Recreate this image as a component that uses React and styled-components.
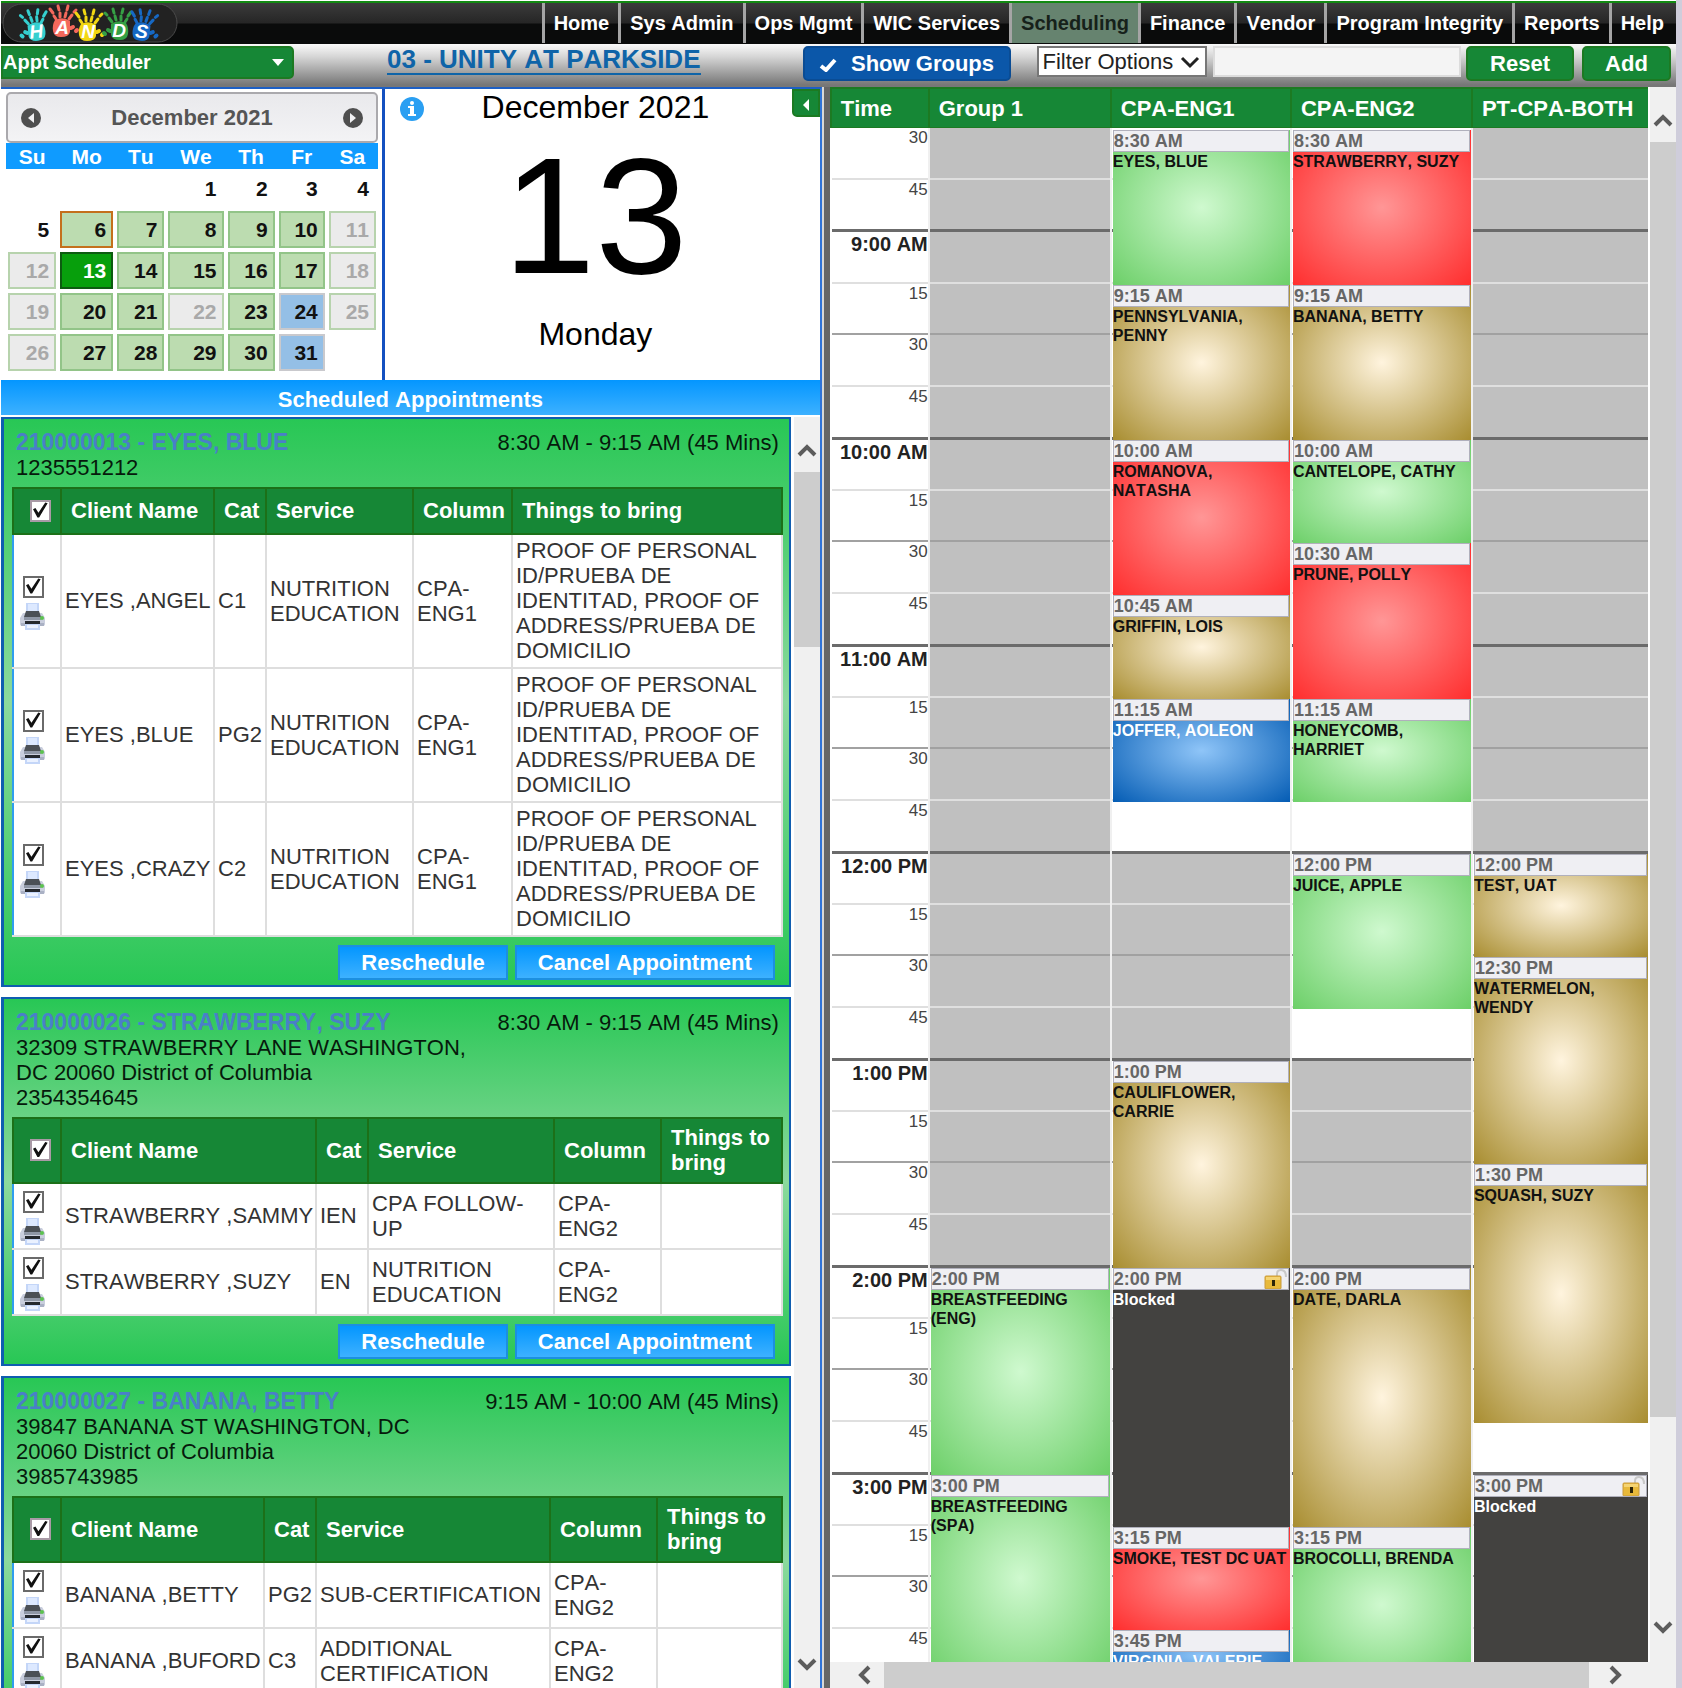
import styled, { createGlobalStyle, css } from 'styled-components'

const GlobalStyle = createGlobalStyle`
  * {
    box-sizing: border-box;
  }

  body {
    margin: 0;
    background: #cfcddb;
    color: #111;
    font-family: 'Liberation Sans', Arial, sans-serif;
    font-size: 22px;
    font-kerning: none;
    line-height: 25px;
  }

  button,
  select,
  input {
    font: inherit;
    font-kerning: none;
    margin: 0;
  }
`

/* ---------- page ---------- */

const Page = styled.div`
  display: flex;
  flex-direction: column;
  height: 100vh;
  margin-right: 6px;
  padding-left: 1px;
  overflow: hidden;
  background: #fff;
`

const Header = styled.header`
  display: flex;
  justify-content: space-between;
  height: 43px;
  flex: none;
  margin-top: 1px;
  border-top: 2px solid #128a12;
  background: linear-gradient(#3b3b3b, #262626 48%, #0a0b0b 52%, #0a0b0b);
`

const Nav = styled.nav`
  display: flex;
  padding-bottom: 1px;
`

const NavLink = styled.a`
  display: flex;
  align-items: center;
  padding: 1px 9px 0;
  border-left: 3px solid #a5a5a5;
  font-size: 20px;
  font-weight: bold;
  text-decoration: none;
  white-space: nowrap;
  color: ${({ $active }) => ($active ? '#16211a' : '#fff')};
  background: ${({ $active }) => ($active ? '#66836f' : 'transparent')};

  &:last-child {
    padding-right: 12px;
  }
`

/* ---------- toolbar ---------- */

const Toolbar = styled.div`
  display: flex;
  align-items: flex-start;
  flex: none;
  height: 43px;
  padding: 2px 5px 0 0;
  background: linear-gradient(#fafafa, #d5d5d5 30%, #777 95%);
`

const ScreenPicker = styled.div`
  display: flex;
  align-items: center;
  flex: 0 0 293px;
  height: 33px;
  border: 2px solid #1c7a22;
  border-radius: 0 5px 5px 0;
  background: #168736;
  color: #fff;

  select {
    flex: 1;
    padding: 0;
    border: 0;
    appearance: none;
    background: none;
    color: inherit;
    font-size: 20px;
    font-weight: bold;
  }

  svg {
    margin-right: 8px;
  }
`

const ClinicLink = styled.a`
  margin: 0 102px 0 93px;
  border-bottom: 2px solid #0f64a8;
  color: #0f64a8;
  font-size: 26px;
  font-weight: bold;
  line-height: 27px;
  text-decoration: none;
  white-space: nowrap;
`

const ToolButton = styled.button`
  display: flex;
  align-items: center;
  justify-content: center;
  gap: 14px;
  flex: none;
  width: ${({ $width }) => $width}px;
  height: 35px;
  padding: 0;
  border: 2px solid ${({ $blue }) => ($blue ? '#0a4c94' : '#1c7a22')};
  border-radius: 5px;
  background: ${({ $blue }) => ($blue ? '#0b57a9' : '#168736')};
  color: #fff;
  font-weight: bold;
`

const FilterPicker = styled.div`
  display: flex;
  align-items: center;
  flex: 0 0 170px;
  height: 31px;
  margin: 0 6px 0 26px;
  border: 2px solid #777;
  background: #fff;

  select {
    flex: 1;
    min-width: 0;
    padding: 0 0 0 4px;
    border: 0;
    appearance: none;
    background: none;
    color: #222;
  }

  svg {
    margin-right: 5px;
  }
`

const SearchInput = styled.input`
  flex: 1;
  min-width: 0;
  height: 31px;
  border: 2px solid #dcdcdc;
  background: #f4f4f4;
`

const ButtonPair = styled.div`
  display: flex;
  gap: 8px;
  margin-left: 5px;
`

/* ---------- left pane ---------- */

const Main = styled.main`
  display: flex;
  flex: 1;
  min-height: 0;
`

const LeftPane = styled.section`
  display: flex;
  flex-direction: column;
  width: 49%;
  border-top: 2px solid #1d5fc4;
  border-right: 2px solid #2f73d8;
`

const Splitter = styled.div`
  flex: 0 0 8px;
  border-left: 2px solid #d8d8d8;
  background: #666;
`

const DateArea = styled.div`
  display: flex;
  flex: none;
  height: 291px;
`

const Calendar = styled.div`
  flex: 0 0 384px;
  padding: 3px 4px 0 5px;
  border-right: 3px solid #1450c0;
`

const CalendarHead = styled.div`
  display: flex;
  align-items: center;
  justify-content: space-between;
  height: 51px;
  padding: 0 12px;
  border: 2px solid #aaa9ad;
  border-radius: 5px;
  background: linear-gradient(#e9e9ec, #f3f3f5);
  color: #555;
  font-weight: bold;
`

const RoundButton = styled.button`
  display: flex;
  padding: 0;
  border: 0;
  background: none;
`

const DateTable = styled.table`
  width: 100%;
  table-layout: fixed;
  border-collapse: collapse;
  font-size: 21px;
  font-weight: bold;

  th {
    height: 26px;
    padding: 0;
    background: #0f9bff;
    color: #fff;
  }

  td {
    height: 41px;
    padding: 1px 2px 3px;
  }
`

const dayLooks = {
  plain: css`
    border-color: transparent;
    background: none;
    color: #111;
  `,
  open: css`
    border-color: #92c488;
    background: #bcdcb0;
    color: #111;
  `,
  today: css`
    border-color: #c4701c;
    background: #bcdcb0;
    color: #111;
  `,
  picked: css`
    border-color: #0c5c10;
    background: #079f0c;
    color: #fff;
  `,
  closed: css`
    border-color: #b7d3ad;
    background: #ebebeb;
    color: #a9a9a9;
  `,
  holiday: css`
    border-color: #c9c9cd;
    background: #94bfe6;
    color: #111;
  `,
}

const Day = styled.button`
  display: block;
  width: 100%;
  height: 37px;
  padding: 0 5px 1px 0;
  border: 2px solid;
  text-align: right;
  ${({ $look }) => dayLooks[$look]}
`

const DayPanel = styled.div`
  display: grid;
  grid-template-columns: 40px 1fr 54px;
  flex: 1;
  text-align: center;
  color: #000;

  > svg {
    margin: 8px 0 0 15px;
  }
`

const BigDate = styled.div`
  display: flex;
  flex-direction: column;
  font-size: 32px;
  line-height: 36px;

  strong {
    margin-bottom: 9px;
    font-size: 166px;
    font-weight: normal;
    line-height: 182px;
  }
`

const CollapseButton = styled.button`
  justify-self: end;
  width: 28px;
  height: 28px;
  padding: 0;
  border: 2px solid #1c7a22;
  border-radius: 0 0 0 5px;
  background: #168736;
`

const ListTitle = styled.h2`
  flex: none;
  height: 35px;
  margin: 0 0 2px;
  background: linear-gradient(#0496ff, #3db1ff);
  color: #fff;
  font-size: 22px;
  line-height: 40px;
  text-align: center;
`

const ListArea = styled.div`
  display: flex;
  gap: 3px;
  flex: 1;
  min-height: 0;
`

const CardList = styled.div`
  flex: 1;
  min-width: 0;
  overflow: hidden;
`

/* ---------- appointment cards ---------- */

const Card = styled.article`
  margin-bottom: 10px;
  padding: 11px 6px 5px 8px;
  border: 2px solid #0f5db0;
  border-left-width: 3px;
  background: linear-gradient(#28c755, #8cd99d 50%, #28c755);
`

const CardHead = styled.div`
  display: flex;
  justify-content: space-between;
  margin-bottom: 7px;
  padding: 0 4px;
  color: #061a0c;

  a {
    display: block;
    color: #4a7fc8;
    font-size: 23px;
    font-weight: bold;
    text-decoration: none;
  }
`

const ClientTable = styled.table`
  width: 100%;
  table-layout: fixed;
  border-collapse: collapse;
  background: #fff;
  color: #333;

  th {
    height: 46px;
    padding: 6px 0 7px 9px;
    border: 2px solid #1c7018;
    background: #168736;
    color: #fff;
    text-align: left;
  }

  td {
    height: 66px;
    padding: 3px 4px 4px 3px;
    border: 2px solid #dedede;
  }

  td:first-child {
    padding: 0 0 0 3px;
    border-left-color: #2f9dee;
  }

  .name,
  .cat {
    padding-right: 0;
    white-space: nowrap;
  }
`

const Picks = styled.div`
  display: flex;
  flex-direction: column;
  align-items: flex-start;
  gap: 5px;
  padding: 3px 0 0 6px;
`

const PrintButton = styled.button`
  display: flex;
  margin-left: -3px;
  padding: 0;
  border: 0;
  background: none;
`

const Tick = styled.input.attrs({ type: 'checkbox', defaultChecked: true })`
  display: block;
  width: 21px;
  height: 22px;
  border: 2px solid #6a6a6a;
  appearance: none;
  background: #fff;

  th & {
    margin-left: 7px;
    border-color: #a99aa6;
  }

  &:checked::before {
    content: '';
    display: block;
    width: 17px;
    height: 17px;
    background: #111;
    clip-path: polygon(6% 45%, 20% 38%, 38% 66%, 78% 6%, 92% 10%, 42% 94%, 32% 94%);
  }
`

const CardActions = styled.div`
  display: flex;
  justify-content: flex-end;
  gap: 7px;
  margin-top: 8px;
  padding-right: 8px;
`

const ActionButton = styled.button`
  height: 35px;
  padding: 0 21px;
  border: 2px solid #1c8fe0;
  background: linear-gradient(#0496ff, #3db1ff);
  color: #fff;
  font-weight: bold;
  line-height: 25px;
`

/* ---------- scrollbars ---------- */

const ScrollTrack = styled.div`
  display: flex;
  flex-direction: ${({ $across }) => ($across ? 'row' : 'column')};
  flex: 0 0 26px;
  background: #f0f0f0;
`

const ScrollButton = styled.button`
  display: flex;
  align-items: center;
  justify-content: center;
  flex: 0 0 ${({ $size }) => $size}px;
  padding: ${({ $inset }) => $inset || '0'};
  border: 0;
  background: none;
`

const ScrollRoom = styled.div`
  display: flex;
  flex-direction: inherit;
  flex: 1;
`

const ScrollThumb = styled.div`
  flex: 0 0 ${({ $share }) => $share}%;
  background: #cdcdcd;
`

/* ---------- schedule ---------- */

const SchedulePane = styled.section`
  display: flex;
  flex-direction: column;
  flex: 1;
  min-width: 0;
`

const ScheduleBody = styled.div`
  display: flex;
  flex: 1;
  min-height: 0;
`

const Columns = styled.div`
  display: grid;
  grid-template-columns: 98px 182fr 180fr 181fr 177fr;
  grid-template-rows: 41px 1fr;
  flex: 1;
  min-width: 0;
  margin-right: 2px;
  overflow: hidden;
`

const ColumnHead = styled.div`
  padding: 7px 0 0 9px;
  border: solid #1c7a22;
  border-width: 2px 0 1px 2px;
  background: #168736;
  color: #fff;
  font-weight: bold;
  white-space: nowrap;
`

const SlotGrid = styled.div`
  display: grid;
  grid-template-columns: 100%;
  grid-template-rows: 50px 51px 53px 51px 52px 52px repeat(6, 52px 51px 52px 52px);
  min-height: 0;
  border-left: 2px solid ${({ $time }) => ($time ? '#fff' : '#f0f0f0')};
`

const slotLines = {
  hour: '3px solid #6b6b6b',
  half: '2px solid #a1a1a1',
  quarter: '2px solid #dfdfdf',
  none: '0 solid #fff',
}

const Slot = styled.div`
  grid-column: 1;
  grid-row: ${({ $row }) => $row};
  border-top: ${({ $line }) => slotLines[$line]};
  background: ${({ $closed }) => ($closed ? '#c0c0c0' : '#fff')};
`

const TimeSlot = styled(Slot)`
  color: #444;
  font-size: 17px;
  line-height: 20px;
  text-align: right;
  white-space: nowrap;

  strong {
    color: #222;
    font-size: 20px;
    line-height: 24px;
  }
`

const eventFills = {
  green: 'radial-gradient(#cff9cf, #6ccf68)',
  red: 'radial-gradient(#ff9696, #ff2e2e)',
  gold: 'radial-gradient(#fff4de, #a88d30)',
  blue: 'radial-gradient(#8fc5f8, #045cb4)',
  dark: '#434240',
}

const EventBlock = styled.div`
  z-index: 1;
  grid-column: 1;
  grid-row: ${({ $row, $span }) => `${$row} / span ${$span}`};
  min-height: 0;
  margin: ${({ $row }) => ($row === 1 ? 2 : 3)}px 0 -3px 1px;
  overflow: hidden;
  background: ${({ $fill }) => eventFills[$fill]};
  color: ${({ $fill }) => ($fill === 'blue' || $fill === 'dark' ? '#fff' : '#111')};
  font-size: 16px;
  font-weight: bold;
  line-height: 19px;
  white-space: pre-line;
`

const EventTime = styled.div`
  display: flex;
  justify-content: space-between;
  height: 22px;
  margin-right: 1px;
  border: 1px solid #b0b0bc;
  background: #efeff3;
  color: #666;
  font-size: 18px;
  line-height: 21px;
`

/* ---------- drawings ---------- */

function Hand({ x, y, color, letter, tilt = 0, mirror }) {
  return (
    <g transform={`translate(${x} ${y}) rotate(${tilt})`}>
      <g transform={mirror ? 'scale(-1 1)' : undefined}>
        <g stroke={color} strokeLinecap="round" fill="none">
          <path d="M-7 -7 L-10 -11 M-12 -14 L-14 -16" strokeWidth="3" />
          <path d="M-3 -9 L-4 -13 M-5 -16 L-6 -20" strokeWidth="3" />
          <path d="M2 -9 L2 -13 M3 -16 L4 -20" strokeWidth="3" />
          <path d="M6 -7 L8 -10 M9 -13 L12 -17" strokeWidth="3" />
          <path d="M-9 2 L-11 1 M-14 5 L-15 4" strokeWidth="4" />
        </g>
        <path d="M-8 -5 Q-1 -10 7 -6 Q10 -1 9 5 Q8 11 1 11 Q-7 11 -8 6Z" fill={color} />
      </g>
      <text
        x="0"
        y="8"
        fill="#fff"
        fontSize="19"
        fontWeight="bold"
        fontStyle="italic"
        textAnchor="middle"
      >
        {letter}
      </text>
    </g>
  )
}

function Logo() {
  return (
    <svg width="178" height="41" viewBox="0 0 178 41" role="img" aria-label="HANDS">
      <rect x="2" y="1" width="174" height="38" rx="19" fill="#222" stroke="#4a4a4a" />
      <Hand x={35} y={27} color="#35cfcf" letter="H" tilt={-6} />
      <Hand x={61} y={23} color="#f4685c" letter="A" mirror />
      <Hand x={87} y={27} color="#f2d713" letter="N" mirror />
      <Hand x={118} y={26} color="#35a045" letter="D" />
      <Hand x={141} y={27} color="#1668c4" letter="S" tilt={6} mirror />
    </svg>
  )
}

function Chevron({ turn = 0, color = '#5c5c5c', width = 4 }) {
  return (
    <svg width="20" height="20" viewBox="0 0 20 20" aria-hidden="true">
      <path
        d="M2 6 L10 14 L18 6"
        transform={`rotate(${turn} 10 10)`}
        fill="none"
        stroke={color}
        strokeWidth={width}
      />
    </svg>
  )
}

function CircleArrow({ flip }) {
  return (
    <svg width="22" height="22" viewBox="0 0 22 22" aria-hidden="true">
      <circle cx="11" cy="11" r="10" fill="#4f4f4f" />
      <path d={flip ? 'M8 6 L14 11 L8 16Z' : 'M14 6 L8 11 L14 16Z'} fill="#f0f0f2" />
    </svg>
  )
}

function InfoIcon() {
  return (
    <svg width="24" height="24" viewBox="0 0 24 24" aria-hidden="true">
      <circle cx="12" cy="12" r="12" fill="#2a9ff2" />
      <circle cx="12" cy="6" r="2" fill="#fff" />
      <path d="M8 9 H14 V17 H16 V19 H8 V17 H10 V11 H8Z" fill="#fff" />
    </svg>
  )
}

function PrinterIcon() {
  return (
    <svg width="25" height="27" viewBox="0 0 25 27" aria-hidden="true">
      <path d="M6 0 H19 V10 H6Z" fill="#c4d6f8" />
      <path d="M8 1 H17 V8 H8Z" fill="#dde9ff" />
      <path d="M3 10 H22 L25 15 V21 Q25 23 22 23 H3 Q0 23 0 21 V15Z" fill="#c9cedd" />
      <path d="M6 8 H19 L21 14 H4Z" fill="#4b5056" />
      <path d="M4 14 H21 V17 H4Z" fill="#8f97a6" />
      <path d="M5 18 H20 V21 H5Z" fill="#24282e" />
      <path d="M1 20 H5 V23 H1Z M20 20 H24 V23 H20Z" fill="#aab1c4" />
      <path d="M5 21 H20 V27 H5Z" fill="#c4d6f8" />
      <path d="M7 22 H18 V25 H7Z" fill="#eaf1ff" />
      <circle cx="22" cy="15" r="2" fill="#5bc24e" />
    </svg>
  )
}

function LockIcon() {
  return (
    <svg width="24" height="20" viewBox="0 0 24 20" aria-hidden="true">
      <path d="M13 7 V5 Q13 1 17 1 Q22 1 22 8" fill="none" stroke="#c9c9c9" strokeWidth="2" />
      <rect x="1" y="7" width="16" height="13" rx="1" fill="#e8b93a" stroke="#c99a3c" />
      <path d="M2 8 H16 V11 H2Z" fill="#f5d473" />
      <rect x="8" y="11" width="3" height="6" fill="#2c2408" />
    </svg>
  )
}

/* ---------- data ---------- */

const menu = [
  'Home',
  'Sys Admin',
  'Ops Mgmt',
  'WIC Services',
  'Scheduling',
  'Finance',
  'Vendor',
  'Program Integrity',
  'Reports',
  'Help',
]

const weekdays = ['Su', 'Mo', 'Tu', 'We', 'Th', 'Fr', 'Sa']
const dayWidths = [52, 57, 51, 59, 51, 50, 51]
const weeks = [
  [0, 0, 0, 1, 2, 3, 4],
  [5, 6, 7, 8, 9, 10, 11],
  [12, 13, 14, 15, 16, 17, 18],
  [19, 20, 21, 22, 23, 24, 25],
  [26, 27, 28, 29, 30, 31, 0],
]

function dayLook(day) {
  if (day < 6) return 'plain'
  if (day === 6) return 'today'
  if (day === 13) return 'picked'
  if ([24, 31].includes(day)) return 'holiday'
  if ([11, 12, 18, 19, 22, 25, 26].includes(day)) return 'closed'
  return 'open'
}

const proofs =
  'PROOF OF PERSONAL ID/PRUEBA DE IDENTITAD, PROOF OF ADDRESS/PRUEBA DE DOMICILIO'

const appointments = [
  {
    title: '210000013 - EYES, BLUE',
    time: '8:30 AM - 9:15 AM (45 Mins)',
    lines: ['1235551212'],
    widths: [48, 153, 52, 147, 99],
    clients: [
      ['EYES ,ANGEL', 'C1', 'NUTRITION EDUCATION', 'CPA-ENG1', proofs],
      ['EYES ,BLUE', 'PG2', 'NUTRITION EDUCATION', 'CPA-ENG1', proofs],
      ['EYES ,CRAZY', 'C2', 'NUTRITION EDUCATION', 'CPA-ENG1', proofs],
    ],
  },
  {
    title: '210000026 - STRAWBERRY, SUZY',
    time: '8:30 AM - 9:15 AM (45 Mins)',
    lines: ['32309 STRAWBERRY LANE WASHINGTON,', 'DC 20060 District of Columbia', '2354354645'],
    widths: [48, 255, 52, 186, 107],
    clients: [
      ['STRAWBERRY ,SAMMY', 'IEN', 'CPA FOLLOW-UP', 'CPA-ENG2', ''],
      ['STRAWBERRY ,SUZY', 'EN', 'NUTRITION EDUCATION', 'CPA-ENG2', ''],
    ],
  },
  {
    title: '210000027 - BANANA, BETTY',
    time: '9:15 AM - 10:00 AM (45 Mins)',
    lines: ['39847 BANANA ST WASHINGTON, DC', '20060 District of Columbia', '3985743985'],
    widths: [48, 203, 52, 234, 107],
    clients: [
      ['BANANA ,BETTY', 'PG2', 'SUB-CERTIFICATION', 'CPA-ENG2', ''],
      ['BANANA ,BUFORD', 'C3', 'ADDITIONAL CERTIFICATION', 'CPA-ENG2', ''],
    ],
  },
]

// start is in slots of 15 minutes counted from 8:30, closed holds [from, to)
const resources = [
  {
    name: 'Group 1',
    closed: [[0, 22]],
    events: [
      { start: 22, slots: 4, time: '2:00 PM', who: 'BREASTFEEDING\n(ENG)', fill: 'green' },
      { start: 26, slots: 4, time: '3:00 PM', who: 'BREASTFEEDING\n(SPA)', fill: 'green' },
    ],
  },
  {
    name: 'CPA-ENG1',
    closed: [[14, 18]],
    events: [
      { start: 0, slots: 3, time: '8:30 AM', who: 'EYES, BLUE', fill: 'green' },
      { start: 3, slots: 3, time: '9:15 AM', who: 'PENNSYLVANIA,\nPENNY', fill: 'gold' },
      { start: 6, slots: 3, time: '10:00 AM', who: 'ROMANOVA,\nNATASHA', fill: 'red' },
      { start: 9, slots: 2, time: '10:45 AM', who: 'GRIFFIN, LOIS', fill: 'gold' },
      { start: 11, slots: 2, time: '11:15 AM', who: 'JOFFER, AOLEON', fill: 'blue' },
      { start: 18, slots: 4, time: '1:00 PM', who: 'CAULIFLOWER,\nCARRIE', fill: 'gold' },
      { start: 22, slots: 5, time: '2:00 PM', who: 'Blocked', fill: 'dark' },
      { start: 27, slots: 2, time: '3:15 PM', who: 'SMOKE, TEST DC UAT', fill: 'red' },
      { start: 29, slots: 1, time: '3:45 PM', who: 'VIRGINIA, VALERIE', fill: 'blue' },
    ],
  },
  {
    name: 'CPA-ENG2',
    closed: [[18, 22]],
    events: [
      { start: 0, slots: 3, time: '8:30 AM', who: 'STRAWBERRY, SUZY', fill: 'red' },
      { start: 3, slots: 3, time: '9:15 AM', who: 'BANANA, BETTY', fill: 'gold' },
      { start: 6, slots: 2, time: '10:00 AM', who: 'CANTELOPE, CATHY', fill: 'green' },
      { start: 8, slots: 3, time: '10:30 AM', who: 'PRUNE, POLLY', fill: 'red' },
      { start: 11, slots: 2, time: '11:15 AM', who: 'HONEYCOMB,\nHARRIET', fill: 'green' },
      { start: 14, slots: 3, time: '12:00 PM', who: 'JUICE, APPLE', fill: 'green' },
      { start: 22, slots: 5, time: '2:00 PM', who: 'DATE, DARLA', fill: 'gold' },
      { start: 27, slots: 3, time: '3:15 PM', who: 'BROCOLLI, BRENDA', fill: 'green' },
    ],
  },
  {
    name: 'PT-CPA-BOTH',
    closed: [[0, 14]],
    events: [
      { start: 14, slots: 2, time: '12:00 PM', who: 'TEST, UAT', fill: 'gold' },
      { start: 16, slots: 4, time: '12:30 PM', who: 'WATERMELON,\nWENDY', fill: 'gold' },
      { start: 20, slots: 5, time: '1:30 PM', who: 'SQUASH, SUZY', fill: 'gold' },
      { start: 26, slots: 4, time: '3:00 PM', who: 'Blocked', fill: 'dark' },
    ],
  },
]

const slots = Array.from({ length: 30 }, (_, index) => {
  const minutes = 510 + index * 15
  const hour = Math.floor(minutes / 60)
  const minute = minutes % 60
  let line = 'quarter'
  if (minute === 0) line = 'hour'
  if (minute === 30) line = 'half'
  if (index === 0) line = 'none'
  return {
    index,
    line,
    minute,
    label: minute ? `${minute}` : `${hour > 12 ? hour - 12 : hour}:00 ${hour < 12 ? 'AM' : 'PM'}`,
  }
})

/* ---------- parts ---------- */

function Scrollbar({ across, start = 55, startInset, end, share }) {
  return (
    <ScrollTrack $across={across}>
      <ScrollButton $size={start} $inset={startInset} aria-label="Scroll back">
        <Chevron turn={across ? 90 : 180} />
      </ScrollButton>
      <ScrollRoom>
        <ScrollThumb $share={share} />
      </ScrollRoom>
      <ScrollButton
        $size={end}
        $inset={across ? '0 36px 0 0' : undefined}
        aria-label="Scroll forward"
      >
        <Chevron turn={across ? -90 : 0} />
      </ScrollButton>
    </ScrollTrack>
  )
}

function MonthCalendar() {
  return (
    <Calendar>
      <CalendarHead>
        <RoundButton aria-label="Previous month">
          <CircleArrow />
        </RoundButton>
        <span>December 2021</span>
        <RoundButton aria-label="Next month">
          <CircleArrow flip />
        </RoundButton>
      </CalendarHead>
      <DateTable>
        <colgroup>
          {dayWidths.map((width, i) => (
            <col key={i} width={width} />
          ))}
        </colgroup>
        <thead>
          <tr>
            {weekdays.map((name) => (
              <th key={name}>{name}</th>
            ))}
          </tr>
        </thead>
        <tbody>
          {weeks.map((week) => (
            <tr key={week[1]}>
              {week.map((day, i) => (
                <td key={i}>{day > 0 && <Day $look={dayLook(day)}>{day}</Day>}</td>
              ))}
            </tr>
          ))}
        </tbody>
      </DateTable>
    </Calendar>
  )
}

function AppointmentCard({ title, time, lines, widths, clients }) {
  return (
    <Card>
      <CardHead>
        <div>
          <a href="#family">{title}</a>
          {lines.map((line) => (
            <div key={line}>{line}</div>
          ))}
        </div>
        <span>{time}</span>
      </CardHead>
      <ClientTable>
        <colgroup>
          {widths.map((width, i) => (
            <col key={i} width={width} />
          ))}
          <col />
        </colgroup>
        <thead>
          <tr>
            <th>
              <Tick aria-label="Select all clients" />
            </th>
            <th>Client Name</th>
            <th>Cat</th>
            <th>Service</th>
            <th>Column</th>
            <th>Things to bring</th>
          </tr>
        </thead>
        <tbody>
          {clients.map(([name, cat, service, column, bring]) => (
            <tr key={name}>
              <td>
                <Picks>
                  <Tick aria-label={name} />
                  <PrintButton aria-label="Print">
                    <PrinterIcon />
                  </PrintButton>
                </Picks>
              </td>
              <td className="name">{name}</td>
              <td className="cat">{cat}</td>
              <td>{service}</td>
              <td>{column}</td>
              <td>{bring}</td>
            </tr>
          ))}
        </tbody>
      </ClientTable>
      <CardActions>
        <ActionButton>Reschedule</ActionButton>
        <ActionButton>Cancel Appointment</ActionButton>
      </CardActions>
    </Card>
  )
}

function ResourceColumn({ closed, events }) {
  const isClosed = (index) => closed.some(([from, to]) => index >= from && index < to)

  return (
    <SlotGrid>
      {slots.map(({ index, line }) => (
        <Slot key={index} $row={index + 1} $line={line} $closed={isClosed(index)} />
      ))}
      {events.map(({ start, slots: span, time, who, fill }) => (
        <EventBlock key={start} $row={start + 1} $span={span} $fill={fill}>
          <EventTime>
            {time}
            {fill === 'dark' && <LockIcon />}
          </EventTime>
          {who}
        </EventBlock>
      ))}
    </SlotGrid>
  )
}

function App() {
  return (
    <Page>
      <GlobalStyle />
      <Header>
        <Logo />
        <Nav>
          {menu.map((item) => (
            <NavLink key={item} href="#menu" $active={item === 'Scheduling'}>
              {item}
            </NavLink>
          ))}
        </Nav>
      </Header>

      <Toolbar>
        <ScreenPicker>
          <select aria-label="Screen">
            <option>Appt Scheduler</option>
          </select>
          <svg width="12" height="7" viewBox="0 0 12 7" aria-hidden="true">
            <path d="M0 0 H12 L6 7Z" fill="#fff" />
          </svg>
        </ScreenPicker>
        <ClinicLink href="#clinic">03 - UNITY AT PARKSIDE</ClinicLink>
        <ToolButton $blue $width={208}>
          <svg width="18" height="16" viewBox="0 0 18 16" aria-hidden="true">
            <path d="M2 10 L7 14 L16 4" fill="none" stroke="#fff" strokeWidth="4" />
          </svg>
          Show Groups
        </ToolButton>
        <FilterPicker>
          <select aria-label="Filter options">
            <option>Filter Options</option>
          </select>
          <Chevron color="#222" width={3} />
        </FilterPicker>
        <SearchInput aria-label="Filter text" />
        <ButtonPair>
          <ToolButton $width={108}>Reset</ToolButton>
          <ToolButton $width={89}>Add</ToolButton>
        </ButtonPair>
      </Toolbar>

      <Main>
        <LeftPane>
          <DateArea>
            <MonthCalendar />
            <DayPanel>
              <InfoIcon />
              <BigDate>
                <span>December 2021</span>
                <strong>13</strong>
                <span>Monday</span>
              </BigDate>
              <CollapseButton aria-label="Collapse">
                <svg width="8" height="12" viewBox="0 0 8 12" aria-hidden="true">
                  <path d="M7 0 V12 L1 6Z" fill="#fff" />
                </svg>
              </CollapseButton>
            </DayPanel>
          </DateArea>
          <ListTitle>Scheduled Appointments</ListTitle>
          <ListArea>
            <CardList>
              {appointments.map((item) => (
                <AppointmentCard key={item.title} {...item} />
              ))}
            </CardList>
            <Scrollbar startInset="12px 0 0" end={48} share={15} />
          </ListArea>
        </LeftPane>
        <Splitter />
        <SchedulePane>
          <ScheduleBody>
            <Columns>
              <ColumnHead>Time</ColumnHead>
              {resources.map(({ name }) => (
                <ColumnHead key={name}>{name}</ColumnHead>
              ))}
              <SlotGrid $time>
                {slots.map(({ index, line, minute, label }) => (
                  <TimeSlot key={index} $row={index + 1} $line={line}>
                    {minute ? label : <strong>{label}</strong>}
                  </TimeSlot>
                ))}
              </SlotGrid>
              {resources.map((resource) => (
                <ResourceColumn key={resource.name} {...resource} />
              ))}
            </Columns>
            <Scrollbar startInset="12px 0 0" end={71} share={88} />
          </ScheduleBody>
          <Scrollbar across start={54} startInset="0 0 0 16px" end={87} share={100} />
        </SchedulePane>
      </Main>
    </Page>
  )
}

export default App
